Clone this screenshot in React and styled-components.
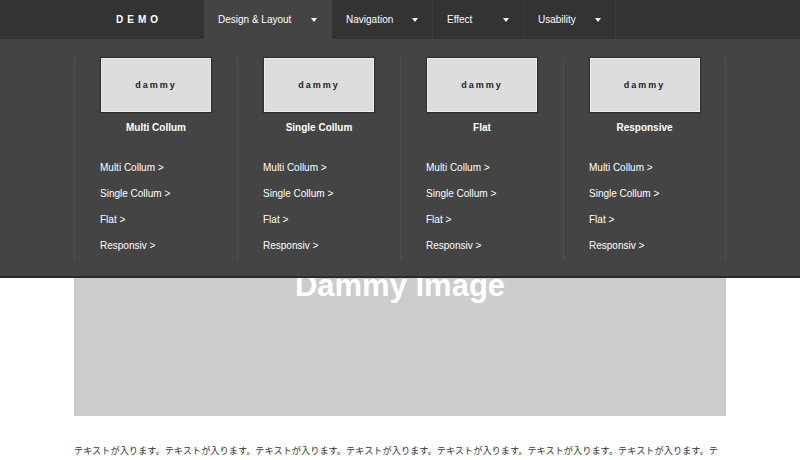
import React from "react";
import styled, { createGlobalStyle } from "styled-components";

const GlobalStyle = createGlobalStyle`
  html, body {
    margin: 0;
    padding: 0;
    background: #fff;
    font-family: "Liberation Sans", Arial, sans-serif;
    overflow: hidden;
  }
`;

const Page = styled.div`
  position: relative;
  width: 800px;
  height: 460px;
  overflow: hidden;
`;

const Header = styled.header`
  position: relative;
  height: 39px;
  background: #333;
`;

const Bar = styled.div`
  width: 652px;
  height: 100%;
  margin: 0 auto;
  display: flex;
`;

const Logo = styled.div`
  width: 130px;
  display: flex;
  align-items: center;
  justify-content: center;
  color: #fff;
  font-size: 10px;
  font-weight: 700;
  letter-spacing: 4px;
`;

const NavItem = styled.div`
  width: ${(p) => p.$w}px;
  box-sizing: border-box;
  padding: 0 14px;
  display: flex;
  align-items: center;
  justify-content: space-between;
  color: #fff;
  font-size: 10px;
  background: ${(p) => (p.$active ? "#444" : "transparent")};
  border-right: 1px solid ${(p) => (p.$active ? "#444" : "#3d3d3d")};
`;

const Caret = styled.span`
  width: 0;
  height: 0;
  border-left: 3.5px solid transparent;
  border-right: 3.5px solid transparent;
  border-top: 4px solid #fff;
`;

const Dropdown = styled.div`
  position: absolute;
  top: 39px;
  left: 0;
  right: 0;
  z-index: 10;
  background: #444;
  padding: 19px 0 16px;
  border-bottom: 2px solid #2a2a2a;
`;

const Columns = styled.div`
  width: 652px;
  margin: 0 auto;
  display: grid;
  grid-template-columns: repeat(4, 163px);
`;

const Column = styled.div`
  box-sizing: border-box;
  border-left: 1px solid #4f4f4f;
  border-right: ${(p) => (p.$last ? "1px solid #4f4f4f" : "none")};
  display: flex;
  flex-direction: column;
  align-items: center;
  padding-bottom: 1px;
`;

const Thumb = styled.div`
  width: 110px;
  height: 54px;
  box-sizing: border-box;
  background: #ddd;
  border: 1px solid #ececec;
  box-shadow: 0 0 1px 1px #2e2e2e;
  display: flex;
  align-items: center;
  justify-content: center;
  color: #222;
  font-size: 9px;
  font-weight: 700;
  letter-spacing: 2px;
`;

const ColTitle = styled.div`
  margin-top: 9px;
  line-height: 14px;
  color: #fff;
  font-size: 10px;
  font-weight: 700;
`;

const Links = styled.ul`
  list-style: none;
  margin: 20px 0 0;
  padding: 0 0 0 25px;
  align-self: stretch;
`;

const LinkItem = styled.li`
  line-height: 26px;
  color: #fff;
  font-size: 10px;
`;

const Main = styled.main`
  width: 652px;
  margin: 20px auto 0;
`;

const Hero = styled.div`
  height: 357px;
  background: #ccc;
  box-sizing: border-box;
  padding-top: 209px;
  text-align: center;
  color: #fff;
  font-size: 31px;
  font-weight: 700;
  line-height: 36px;
`;

const Body = styled.p`
  margin: 27px 0 0;
  color: #333;
  font-family: "Liberation Sans", "Noto Sans CJK JP", sans-serif;
  font-size: 9.2px;
  line-height: 16px;
`;

const navItems = [
  { label: "Design & Layout", w: 128, active: true },
  { label: "Navigation", w: 101 },
  { label: "Effect", w: 91 },
  { label: "Usability", w: 92 },
];

const columns = ["Multi Collum", "Single Collum", "Flat", "Responsive"];
const links = ["Multi Collum >", "Single Collum >", "Flat >", "Responsiv >"];

export default function App() {
  return (
    <Page>
      <GlobalStyle />
      <Header>
        <Bar>
          <Logo>DEMO</Logo>
          {navItems.map((n) => (
            <NavItem key={n.label} $w={n.w} $active={n.active}>
              {n.label}
              <Caret />
            </NavItem>
          ))}
        </Bar>
      </Header>
      <Dropdown>
        <Columns>
          {columns.map((c, i) => (
            <Column key={c} $last={i === columns.length - 1}>
              <Thumb>dammy</Thumb>
              <ColTitle>{c}</ColTitle>
              <Links>
                {links.map((l) => (
                  <LinkItem key={l}>{l}</LinkItem>
                ))}
              </Links>
            </Column>
          ))}
        </Columns>
      </Dropdown>
      <Main>
        <Hero>Dammy Image</Hero>
        <Body>
          {"テキストが入ります。".repeat(14)}
        </Body>
      </Main>
    </Page>
  );
}
